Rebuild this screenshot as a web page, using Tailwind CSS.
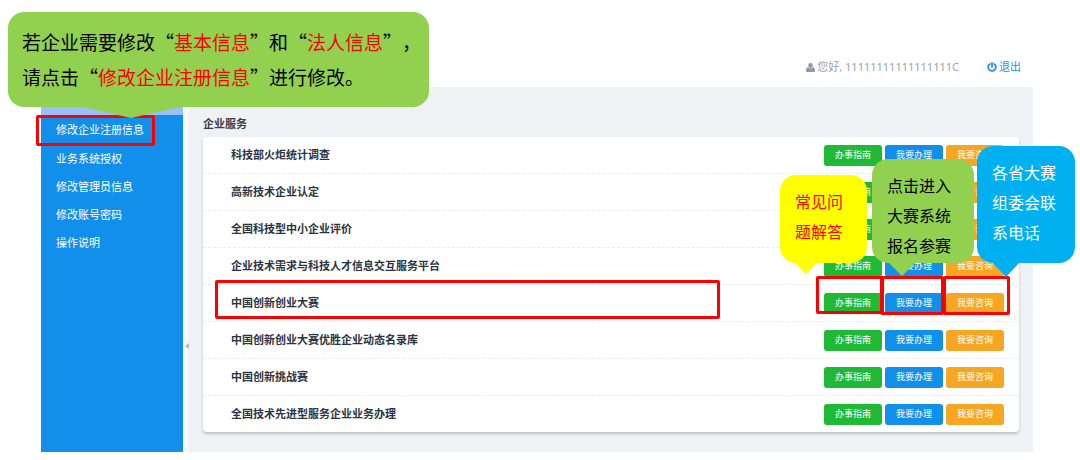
<!DOCTYPE html>
<html lang="zh-CN">
<head>
<meta charset="utf-8">
<title>企业服务</title>
<script src="https://cdn.jsdelivr.net/npm/@tailwindcss/browser@4"></script>
</head>
<body class="bg-white font-['Noto_Sans','Noto_Sans_CJK_SC',sans-serif] text-[11px] leading-4">
<div class="relative flex min-h-screen flex-col pl-[41px] pr-[47px] pb-2">
  <header class="flex h-[87px] items-end justify-end gap-7 pr-3 pb-3">
    <span class="flex items-center gap-[2px] text-[#9ba3ad]">
      <svg class="h-[9px] w-[9px]" viewBox="0 0 20 20" fill="#8b98a5" aria-hidden="true"><path d="M10 0a5 5.3 0 0 1 5 5.3c0 3-2 5.700-5 5.700S5 8.300 5 5.300A5 5.300 0 0 1 10 0zM5 9.500c1.300 1.800 3 2.700 5 2.700s3.700-.9 5-2.700c3.500.5 5 3.500 5 7.500 0 2-1.200 3-3 3H3c-1.800 0-3-1-3-3 0-4 1.500-7 5-7.500z"/></svg>
      您好, 11111111111111111C
    </span>
    <a href="#" class="flex items-center gap-[2px] text-[#2a8eea]">
      <svg class="h-[10px] w-[10px]" viewBox="0 0 20 20" fill="none" stroke="currentColor" stroke-width="3.600" stroke-linecap="round" aria-hidden="true"><path d="M10 2v7.500M5.500 4a7.700 7.700 0 1 0 9 0"/></svg>
      退出
    </a>
  </header>

  <div class="flex flex-1">
    <nav class="w-[142px] shrink-0 bg-[#128eeb] text-white">
      <a href="#" class="flex h-7 items-center bg-[#9bbff9] pl-[15px]">首页</a>
      <div class="relative">
        <a href="#" class="flex h-[30px] items-center pl-[15px]">修改企业注册信息</a>
        <div class="pointer-events-none absolute -left-[5px] top-0 h-[31px] w-[119px] rounded-xs border-3 border-[#fe0000]"></div>
      </div>
      <a href="#" class="flex h-7 items-center pl-[15px]">业务系统授权</a>
      <a href="#" class="flex h-7 items-center pl-[15px]">修改管理员信息</a>
      <a href="#" class="flex h-7 items-center pl-[15px]">修改账号密码</a>
      <a href="#" class="flex h-7 items-center pl-[15px]">操作说明</a>
    </nav>
    <div class="flex w-[6px] shrink-0 items-center justify-end bg-[#f7f7f7] pt-[153px]">
      <svg class="h-[6px] w-[4px]" viewBox="0 0 4 6" fill="#b5b8bb" aria-hidden="true"><path d="M4 0v6L0 3z"/></svg>
    </div>

    <main class="min-w-0 flex-1 bg-[#eef2f5] px-[14px] pt-7">
      <h1 class="pt-px pb-[5px] font-bold text-[#3a3d42]">企业服务</h1>
      <ul class="rounded bg-white font-bold text-[#2b3442] shadow-[0_2px_3px_rgba(0,0,0,0.2)]">
        <li class="flex h-[37px] items-center border-b border-dashed border-[#e9edf0] pl-7 pr-[15px]">
          <span class="flex-1">科技部火炬统计调查</span>
          <div class="flex gap-[3px] text-[9px] font-normal text-white">
            <button class="h-[21px] w-[58px] rounded-[3px] bg-[#1fb935]">办事指南</button>
            <button class="h-[21px] w-[58px] rounded-[3px] bg-[#128eeb]">我要办理</button>
            <button class="h-[21px] w-[58px] rounded-[3px] bg-[#f6a623]">我要咨询</button>
          </div>
        </li>
        <li class="flex h-[37px] items-center border-b border-dashed border-[#e9edf0] pl-7 pr-[15px]">
          <span class="flex-1">高新技术企业认定</span>
          <div class="flex gap-[3px] text-[9px] font-normal text-white">
            <button class="h-[21px] w-[58px] rounded-[3px] bg-[#1fb935]">办事指南</button>
            <button class="h-[21px] w-[58px] rounded-[3px] bg-[#128eeb]">我要办理</button>
            <button class="h-[21px] w-[58px] rounded-[3px] bg-[#f6a623]">我要咨询</button>
          </div>
        </li>
        <li class="flex h-[37px] items-center border-b border-dashed border-[#e9edf0] pl-7 pr-[15px]">
          <span class="flex-1">全国科技型中小企业评价</span>
          <div class="flex gap-[3px] text-[9px] font-normal text-white">
            <button class="h-[21px] w-[58px] rounded-[3px] bg-[#1fb935]">办事指南</button>
            <button class="h-[21px] w-[58px] rounded-[3px] bg-[#128eeb]">我要办理</button>
            <button class="h-[21px] w-[58px] rounded-[3px] bg-[#f6a623]">我要咨询</button>
          </div>
        </li>
        <li class="flex h-[37px] items-center border-b border-dashed border-[#e9edf0] pl-7 pr-[15px]">
          <span class="flex-1">企业技术需求与科技人才信息交互服务平台</span>
          <div class="flex gap-[3px] text-[9px] font-normal text-white">
            <button class="h-[21px] w-[58px] rounded-[3px] bg-[#1fb935]">办事指南</button>
            <button class="h-[21px] w-[58px] rounded-[3px] bg-[#128eeb]">我要办理</button>
            <button class="h-[21px] w-[58px] rounded-[3px] bg-[#f6a623]">我要咨询</button>
          </div>
        </li>
        <li class="relative flex h-[37px] items-center border-b border-dashed border-[#e9edf0] pl-7 pr-[15px]">
          <span class="flex-1">中国创新创业大赛</span>
          <div class="flex gap-[3px] text-[9px] font-normal text-white">
            <button class="h-[21px] w-[58px] rounded-[3px] bg-[#1fb935]">办事指南</button>
            <button class="h-[21px] w-[58px] rounded-[3px] bg-[#128eeb]">我要办理</button>
            <button class="h-[21px] w-[58px] rounded-[3px] bg-[#f6a623]">我要咨询</button>
          </div>
          <!-- Highlight frames and callouts over this row -->
          <div class="pointer-events-none absolute -top-[5px] left-[12px] h-[39px] w-[505px] rounded-xs border-3 border-[#fe0000]"></div>
          <div class="pointer-events-none absolute -top-[9px] right-[135px] h-[38px] w-[68px] rounded-xs border-3 border-[#fe0000]"></div>
          <div class="pointer-events-none absolute -top-[9px] right-[75px] h-[39px] w-[64px] rounded-xs border-3 border-[#fe0000]"></div>
          <div class="pointer-events-none absolute -top-[9px] right-[9px] h-[39px] w-[67px] rounded-xs border-3 border-[#fe0000]"></div>
          <div class="absolute bottom-[58px] right-[152px] w-[87px] rounded-[16px] bg-[#ffff00] px-[15px] pt-3 pb-4 text-base leading-[30px] font-normal text-[#fe0000]">
            常见问<br>题解答
            <svg class="absolute top-full left-[14px] -mt-px h-[12px] w-[24px]" viewBox="0 0 24 12" fill="#ffff00" aria-hidden="true"><path d="M0 0h24L12 12z"/></svg>
          </div>
          <div class="absolute bottom-[58px] right-[45px] w-[102px] rounded-[16px] bg-[#92d050] px-[15px] pt-3 pb-[2px] text-base leading-[30px] font-normal text-black">
            点击进入<br>大赛系统<br>报名参赛
            <svg class="absolute top-full left-[16px] -mt-px h-[14px] w-[28px]" viewBox="0 0 28 14" fill="#92d050" aria-hidden="true"><path d="M0 0h28L14 14z"/></svg>
          </div>
          <div class="absolute bottom-[58px] -right-[56px] w-[98px] rounded-[16px] bg-[#00b0f0] px-[15px] pt-3 pb-[15px] text-base leading-[30px] font-normal text-white">
            各省大赛<br>组委会联<br>系电话
            <svg class="absolute top-full left-[15px] -mt-px h-[15px] w-[28px]" viewBox="0 0 28 15" fill="#00b0f0" aria-hidden="true"><path d="M0 0h28L14 15z"/></svg>
          </div>
        </li>
        <li class="flex h-[37px] items-center border-b border-dashed border-[#e9edf0] pl-7 pr-[15px]">
          <span class="flex-1">中国创新创业大赛优胜企业动态名录库</span>
          <div class="flex gap-[3px] text-[9px] font-normal text-white">
            <button class="h-[21px] w-[58px] rounded-[3px] bg-[#1fb935]">办事指南</button>
            <button class="h-[21px] w-[58px] rounded-[3px] bg-[#128eeb]">我要办理</button>
            <button class="h-[21px] w-[58px] rounded-[3px] bg-[#f6a623]">我要咨询</button>
          </div>
        </li>
        <li class="flex h-[37px] items-center border-b border-dashed border-[#e9edf0] pl-7 pr-[15px]">
          <span class="flex-1">中国创新挑战赛</span>
          <div class="flex gap-[3px] text-[9px] font-normal text-white">
            <button class="h-[21px] w-[58px] rounded-[3px] bg-[#1fb935]">办事指南</button>
            <button class="h-[21px] w-[58px] rounded-[3px] bg-[#128eeb]">我要办理</button>
            <button class="h-[21px] w-[58px] rounded-[3px] bg-[#f6a623]">我要咨询</button>
          </div>
        </li>
        <li class="flex h-9 items-center pl-7 pr-[15px]">
          <span class="flex-1">全国技术先进型服务企业业务办理</span>
          <div class="flex gap-[3px] text-[9px] font-normal text-white">
            <button class="h-[21px] w-[58px] rounded-[3px] bg-[#1fb935]">办事指南</button>
            <button class="h-[21px] w-[58px] rounded-[3px] bg-[#128eeb]">我要办理</button>
            <button class="h-[21px] w-[58px] rounded-[3px] bg-[#f6a623]">我要咨询</button>
          </div>
        </li>
      </ul>
    </main>
  </div>

  <div class="absolute top-3 left-2 rounded-[16px] bg-[#92d050] pt-3 pr-2 pb-[13px] pl-[14px] font-['Noto_Sans_CJK_SC',sans-serif] text-[19px] leading-[35px] whitespace-nowrap text-black [text-spacing-trim:space-all]">
    若企业需要修改“<span class="text-[#fe0000]">基本信息</span>”和“<span class="text-[#fe0000]">法人信息</span>”，<br>请点击“<span class="text-[#fe0000]">修改企业注册信息</span>”进行修改。
    <svg class="absolute top-full left-[70px] -mt-px h-[12px] w-[106px]" viewBox="0 0 106 12" fill="#92d050" aria-hidden="true"><path d="M0 0h106L53 12z"/></svg>
  </div>
</div>
</body>
</html>
